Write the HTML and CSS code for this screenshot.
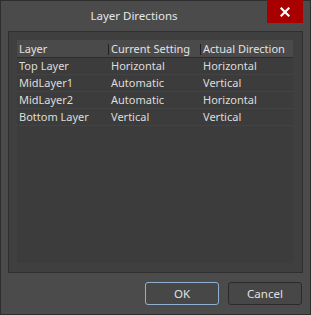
FILE: index.html
```html
<!DOCTYPE html>
<html lang="en">
<head>
    <meta charset="UTF-8">
    <title>Layer Directions</title>
    <link rel="stylesheet" href="styles.css">
</head>
<body>
    <div class="dialog">
        <div class="title-bar">
            <span class="title">Layer Directions</span>
            <button class="close-btn" aria-label="Close">
                <svg width="10" height="10" viewBox="0 0 10 10">
                    <path d="M1.5 1.5 L8.5 8.5 M8.5 1.5 L1.5 8.5" stroke="#fff" stroke-width="2.2" stroke-linecap="square"/>
                </svg>
            </button>
        </div>

        <div class="panel">
            <div class="layer-list">
                <div class="list-row list-header">
                    <div class="cell">Layer</div>
                    <div class="cell">Current Setting</div>
                    <div class="cell">Actual Direction</div>
                </div>
                <div class="list-row">
                    <div class="cell">Top Layer</div>
                    <div class="cell">Horizontal</div>
                    <div class="cell">Horizontal</div>
                </div>
                <div class="list-row">
                    <div class="cell">MidLayer1</div>
                    <div class="cell">Automatic</div>
                    <div class="cell">Vertical</div>
                </div>
                <div class="list-row">
                    <div class="cell">MidLayer2</div>
                    <div class="cell">Automatic</div>
                    <div class="cell">Horizontal</div>
                </div>
                <div class="list-row">
                    <div class="cell">Bottom Layer</div>
                    <div class="cell">Vertical</div>
                    <div class="cell">Vertical</div>
                </div>
            </div>
        </div>

        <div class="button-bar">
            <button class="btn btn-default">OK</button>
            <button class="btn">Cancel</button>
        </div>
    </div>
</body>
</html>
```

FILE: styles.css
```css
* {
    margin: 0;
    padding: 0;
    box-sizing: border-box;
    font-family: 'Noto Sans', 'Open Sans', sans-serif;
}

body {
    background: #2b2b2b;
}

.dialog {
    width: 311px;
    height: 315px;
    background: #4b4b4b;
    border: 1px solid #2e2e2e;
    display: flex;
    flex-direction: column;
}

.title-bar {
    height: 30px;
    display: flex;
    align-items: flex-start;
}

.title {
    flex: 1;
    text-align: center;
    color: #e6e6e6;
    font-size: 11.5px;
    line-height: 30px;
}

.close-btn {
    margin: -1px 7px 0 0;
    width: 36px;
    height: 23px;
    background: #a80000;
    border: none;
    display: flex;
    align-items: center;
    justify-content: center;
}

.panel {
    margin: 0 7px;
    height: 242px;
    background: #3f3f3f;
    border: 1px solid #2f2f2f;
    padding: 8px 9px 9px 8px;
}

.layer-list {
    height: 100%;
    background: #3c3c3c;
}

.list-row {
    display: grid;
    grid-template-columns: 91px 92px 1fr;
    height: 17px;
    border-bottom: 1px solid #434343;
}

.cell {
    color: #dcdcdc;
    font-size: 11px;
    line-height: 16px;
    padding-left: 3px;
    white-space: nowrap;
    overflow: hidden;
}

.cell:first-child {
    padding-left: 2px;
}

.list-header {
    height: 18px;
    background: #4a4a4a;
    border-bottom: 1px solid #2c2c2c;
}

.list-header .cell {
    color: #e2e2e2;
    line-height: 17px;
}

.list-header .cell + .cell {
    position: relative;
}

.list-header .cell + .cell::before {
    content: "";
    position: absolute;
    left: 0;
    top: 4px;
    height: 11px;
    border-left: 1px solid #222;
}

.button-bar {
    display: flex;
    justify-content: flex-end;
    gap: 9px;
    padding: 9px 8px 0 0;
}

.btn {
    width: 74px;
    height: 23px;
    background: #474747;
    border: 1px solid #2a2a2a;
    border-radius: 3px;
    color: #e2e2e2;
    font-size: 11.5px;
}

.btn-default {
    border-color: #8fb1cf;
}
```
